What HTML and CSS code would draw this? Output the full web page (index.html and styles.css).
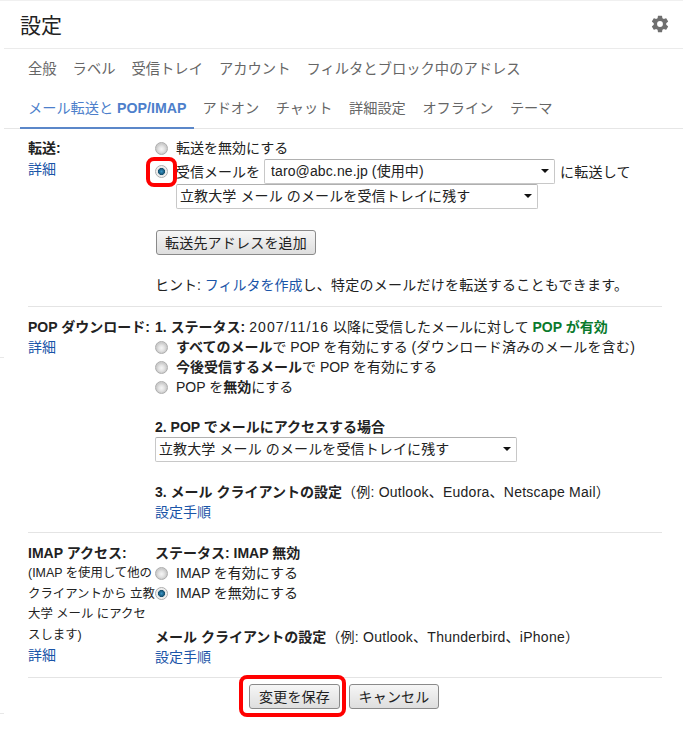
FILE: index.html
```html
<!DOCTYPE html>
<html lang="ja">
<head>
<meta charset="utf-8">
<title>設定</title>
<link rel="stylesheet" href="styles.css">
</head>
<body>
<header class="head">
  <h1 class="title">設定</h1>
  <svg class="gear" viewBox="0 0 24 24" width="20" height="20"><path fill="#6f6f6f" d="M19.43 12.98c.04-.32.07-.64.07-.98s-.03-.66-.07-.98l2.11-1.65c.19-.15.24-.42.12-.64l-2-3.46c-.12-.22-.39-.3-.61-.22l-2.49 1c-.52-.4-1.08-.73-1.69-.98l-.38-2.65A.49.49 0 0 0 14 2h-4c-.25 0-.46.18-.49.42l-.38 2.65c-.61.25-1.17.59-1.69.98l-2.49-1c-.23-.09-.49 0-.61.22l-2 3.46c-.13.22-.07.49.12.64l2.11 1.65c-.04.32-.07.65-.07.98s.03.66.07.98l-2.11 1.65c-.19.15-.24.42-.12.64l2 3.46c.12.22.39.3.61.22l2.49-1c.52.4 1.08.73 1.69.98l.38 2.65c.03.24.24.42.49.42h4c.25 0 .46-.18.49-.42l.38-2.65c.61-.25 1.17-.59 1.69-.98l2.49 1c.23.09.49 0 .61-.22l2-3.46c.12-.22.07-.49-.12-.64l-2.11-1.65zM12 15.5a3.5 3.5 0 1 1 0-7 3.5 3.5 0 0 1 0 7z"/></svg>
</header>
<nav class="tabs">
  <div class="tabrow first">
    <a class="tab">全般</a><a class="tab">ラベル</a><a class="tab">受信トレイ</a><a class="tab">アカウント</a><a class="tab">フィルタとブロック中のアドレス</a>
  </div>
  <div class="tabrow second">
    <a class="tab active">メール転送と <span class="b">POP/IMAP</span></a><a class="tab">アドオン</a><a class="tab">チャット</a><a class="tab">詳細設定</a><a class="tab">オフライン</a><a class="tab">テーマ</a>
  </div>
</nav>
<main class="settings">
  <section class="sec sec-fwd">
    <div class="side">
      <div class="b">転送:</div>
      <a class="link fwd-link">詳細</a>
    </div>
    <div class="body">
      <label class="opt"><input type="radio" name="f" class="radio">転送を無効にする</label>
      <div class="opt fwd-row">
        <span class="marked"><input type="radio" name="f" class="radio" checked></span>受信メールを
        <span class="sel sel-addr"><select><option>taro@abc.ne.jp (使用中)</option></select></span>
        <span class="wide">に転送して</span>
      </div>
      <div class="sel-line"><span class="sel sel-keep"><select><option>立教大学 メール のメールを受信トレイに残す</option></select></span></div>
      <button class="btn btn-add" type="button">転送先アドレスを追加</button>
      <p class="hint">ヒント: <a class="link">フィルタを作成</a><span class="wide">し、特定のメールだけを転送することもできます。</span></p>
    </div>
  </section>
  <section class="sec sec-pop">
    <div class="side">
      <div class="b">POP ダウンロード:</div>
      <a class="link">詳細</a>
    </div>
    <div class="body">
      <div><span class="b">1. ステータス:</span> <span class="date">2007/11/16</span> 以降に受信したメールに対して <span class="b green">POP が有効</span></div>
      <label class="opt"><input type="radio" name="p" class="radio"><span><span class="b">すべてのメール</span>で POP を有効にする <span class="wide">(ダウンロード済みのメールを含む)</span></span></label>
      <label class="opt"><input type="radio" name="p" class="radio"><span><span class="b">今後受信するメール</span>で POP を有効にする</span></label>
      <label class="opt"><input type="radio" name="p" class="radio"><span>POP を<span class="b">無効</span>にする</span></label>
      <div class="b gap-h">2. POP でメールにアクセスする場合</div>
      <div class="sel-line3"><span class="sel sel-pop"><select><option>立教大学 メール のメールを受信トレイに残す</option></select></span></div>
      <div class="gap-3"><span class="b">3. メール クライアントの設定</span><span class="wide">（例: Outlook、Eudora、Netscape Mail）</span></div>
      <a class="link">設定手順</a>
    </div>
  </section>
  <section class="sec sec-imap">
    <div class="side">
      <div class="b">IMAP アクセス:</div>
      <div class="note">(IMAP を使用して他のクライアントから 立教大学 メール にアクセスします)</div>
      <a class="link">詳細</a>
    </div>
    <div class="body">
      <div class="b">ステータス: IMAP 無効</div>
      <label class="opt"><input type="radio" name="i" class="radio">IMAP を有効にする</label>
      <label class="opt"><input type="radio" name="i" class="radio" checked>IMAP を無効にする</label>
      <div class="gap-c"><span class="b">メール クライアントの設定</span><span class="wide">（例: Outlook、Thunderbird、iPhone）</span></div>
      <a class="link">設定手順</a>
    </div>
  </section>
  <footer class="actions">
    <span class="marked-save"><button class="btn btn-save" type="button">変更を保存</button></span>
    <button class="btn btn-cancel" type="button">キャンセル</button>
  </footer>
</main>
<span class="edge edge-a"></span>
<span class="edge edge-b"></span>
</body>
</html>
```
FILE: styles.css
```css
*, *::before, *::after { box-sizing: border-box; }
html, body { margin: 0; padding: 0; }
body {
  position: relative;
  width: 683px;
  height: 732px;
  overflow: hidden;
  background: #fff;
  color: #222;
  font: 14px/20px "Liberation Sans", "Noto Sans CJK JP", sans-serif;
  border-top: 1px solid #f0f0f0;
}
.edge { position: absolute; left: 0; width: 4px; height: 1px; background: #e8e8e8; }
.edge-a { top: 356px; }
.edge-b { top: 712px; }
.head {
  display: flex;
  justify-content: space-between;
  align-items: center;
  height: 48px;
  margin-left: 4px;
  padding: 0 13px 0 16px;
  border-bottom: 1px solid #ebebeb;
}
.title { margin: 2px 0 0; font-size: 21px; font-weight: 400; line-height: 24px; color: #222; }
.gear { display: block; margin-bottom: 2px; }
.tabs { margin-left: 4px; padding-left: 16px; border-bottom: 1px solid #e6e6e6; color: #666; }
.tabrow { display: flex; font-size: 14.2px; }
.first { height: 40px; padding-top: 10px; font-size: 14.3px; }
.second { height: 39px; padding-top: 9px; }
.tab { display: block; padding: 0 8px; height: 31px; color: #666; white-space: nowrap; }
.second .tab { margin-right: 0.6px; }
.second .active { color: #4d7fcb; border-bottom: 2px solid #5b87c9; margin-right: 0; }
.settings { margin: 0 21px 0 28px; }
.sec { display: grid; grid-template-columns: 127px 1fr; border-bottom: 1px solid #e4e4e4; }
.sec-fwd { padding: 9px 0 11px; }
.sec-pop { padding: 10px 0 10px; }
.sec-imap { padding: 10px 0 10px; }
.b { font-weight: 700; }
.link { display: block; color: #1a55a8; }
.fwd-link { margin-top: 1px; }
.hint .link { display: inline; }
.green { color: #0a7a2c; }
.date { letter-spacing: 1.1px; }
.wide { letter-spacing: 0.25px; }
.body { min-width: 0; }
.opt { display: flex; align-items: center; height: 20px; white-space: nowrap; }
.radio {
  appearance: none;
  flex: none;
  width: 13px;
  height: 13px;
  margin: 0 8px 0 0;
  border: 1px solid #adadad;
  border-radius: 50%;
  background: radial-gradient(circle closest-side at 50% 55%, #f6f6f6 0, #e2e2e2 60%, #cdcdcd 100%);
}
.radio:checked { background: radial-gradient(circle closest-side, #3a96c8 0, #14506f 58%, #e6e6e6 70%, #f4f4f4 100%); }
.fwd-row { height: 25px; margin-top: 1px; }
.marked { position: relative; display: flex; }
.marked::after {
  content: "";
  position: absolute;
  left: -9px;
  top: -8px;
  width: 31px;
  height: 30px;
  border: 4px solid #f00;
  border-radius: 8px;
}
.sel { position: relative; display: inline-block; }
.sel::after {
  content: "";
  position: absolute;
  right: 6px;
  top: 10px;
  border-style: solid;
  border-width: 4px 4px 0;
  border-color: #111 transparent transparent;
  pointer-events: none;
}
.sel select {
  appearance: none;
  display: block;
  width: 100%;
  height: 25px;
  padding: 0 0 2px 3px;
  border: 1px solid #c8c8c8;
  border-top-color: #b0b0b0;
  border-radius: 2px;
  background: #fff;
  color: #222;
  font: inherit;
  letter-spacing: 0.12px;
}
.sel-addr { width: 291px; margin: 0 5px 0 4px; }
.sel-addr select { padding-left: 6px; }
.sel-line { padding-left: 21px; height: 25px; }
.sel-keep { width: 362px; }
.sel-line3 { height: 25px; }
.sel-pop { width: 362px; }
.btn {
  display: block;
  height: 25px;
  padding: 0;
  border: 1px solid #8a8a8a;
  border-radius: 3px;
  background: linear-gradient(#f6f6f6, #dedede);
  color: #222;
  font: inherit;
  letter-spacing: 0.2px;
}
.btn-add { width: 160px; margin: 21px 0 0 1px; }
.hint { margin: 20px 0 0; }
.gap-h { margin-top: 20px; }
.gap-3 { margin-top: 20px; }
.note { width: 128px; line-height: 20.5px; font-size: 12.4px; color: #222; word-break: break-all; }
.gap-c { margin-top: 24px; }
.actions { display: flex; gap: 9px; padding: 6px 0 0 221px; }
.marked-save { position: relative; display: block; }
.marked-save::after {
  content: "";
  position: absolute;
  left: -10px;
  top: -9px;
  width: 107px;
  height: 42px;
  border: 4px solid #f00;
  border-radius: 8px;
  pointer-events: none;
}
.btn-save { width: 91px; }
.btn-cancel { width: 90px; }
```
